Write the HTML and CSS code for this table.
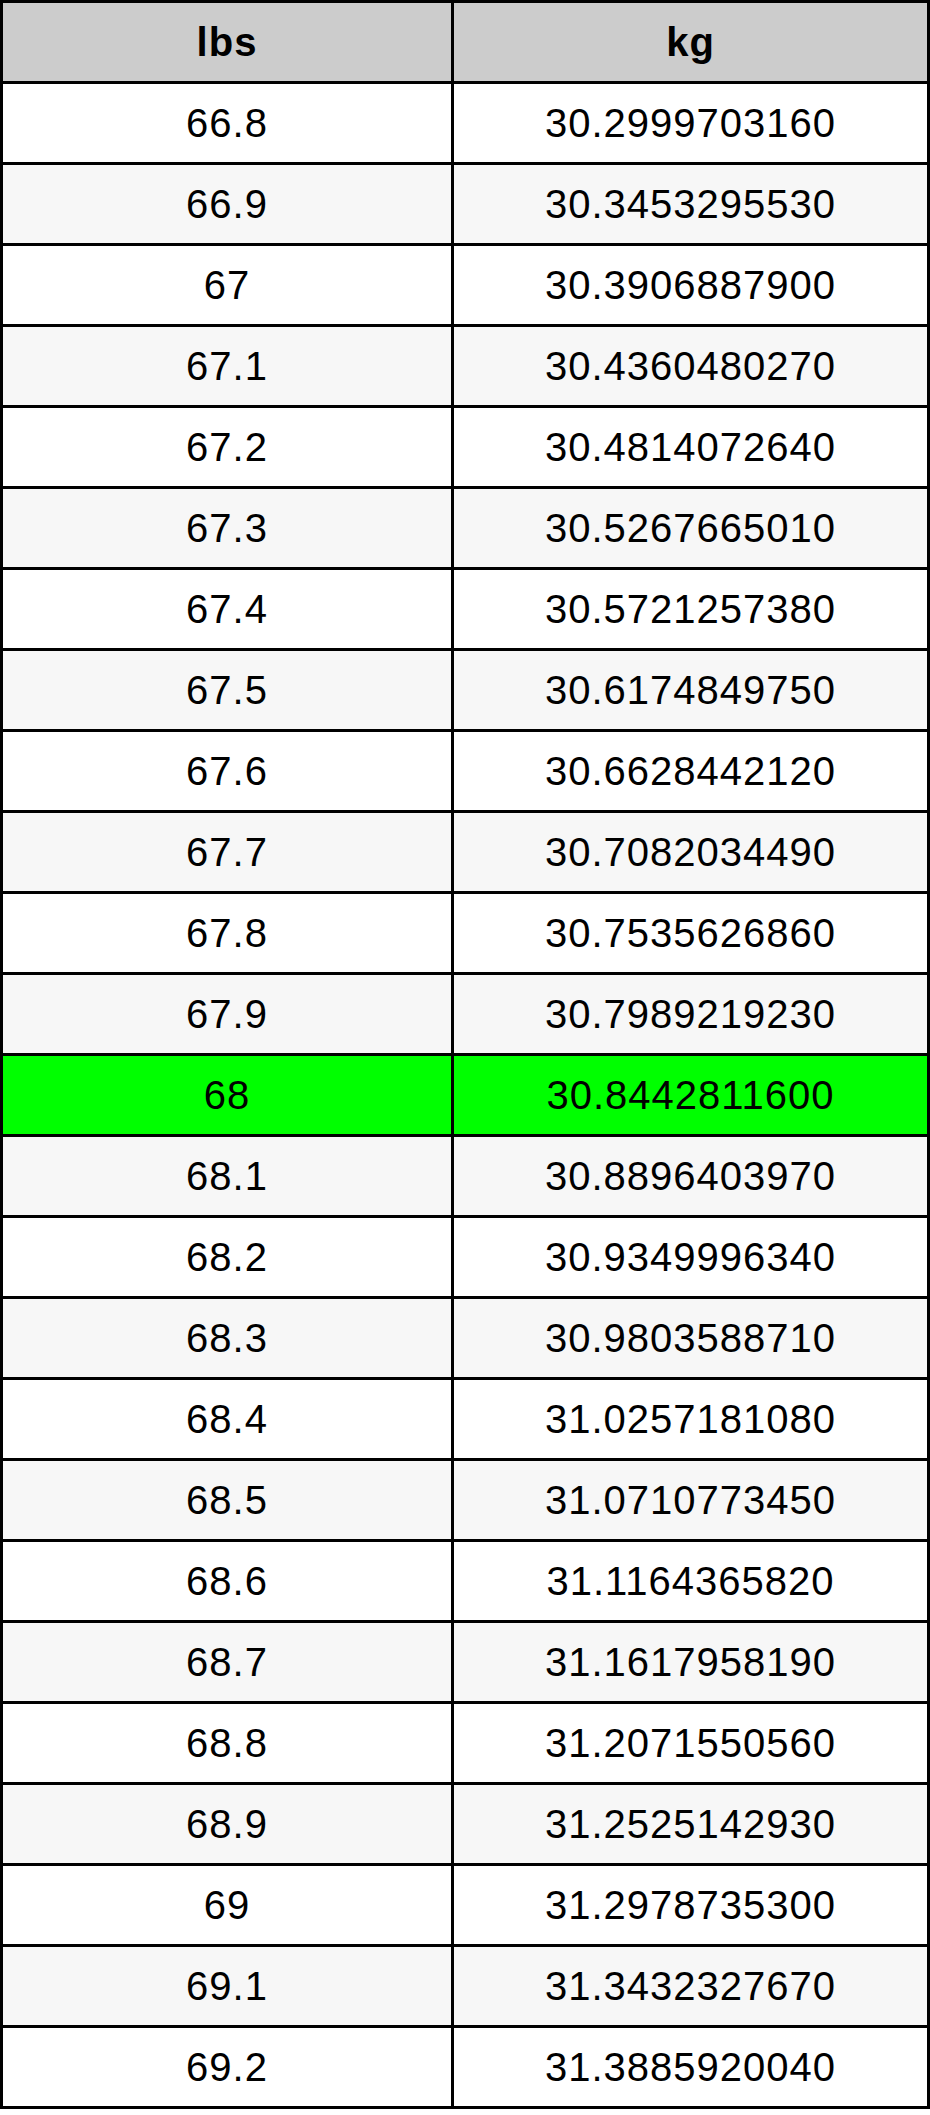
FILE: index.html
```html
<!DOCTYPE html>
<html>
<head>
<meta charset="utf-8">
<link rel="stylesheet" href="styles.css">
</head>
<body>
<div class="table">
  <div class="cell head">lbs</div><div class="cell head">kg</div>
  <div class="cell">66.8</div><div class="cell">30.2999703160</div>
  <div class="cell alt">66.9</div><div class="cell alt">30.3453295530</div>
  <div class="cell">67</div><div class="cell">30.3906887900</div>
  <div class="cell alt">67.1</div><div class="cell alt">30.4360480270</div>
  <div class="cell">67.2</div><div class="cell">30.4814072640</div>
  <div class="cell alt">67.3</div><div class="cell alt">30.5267665010</div>
  <div class="cell">67.4</div><div class="cell">30.5721257380</div>
  <div class="cell alt">67.5</div><div class="cell alt">30.6174849750</div>
  <div class="cell">67.6</div><div class="cell">30.6628442120</div>
  <div class="cell alt">67.7</div><div class="cell alt">30.7082034490</div>
  <div class="cell">67.8</div><div class="cell">30.7535626860</div>
  <div class="cell alt">67.9</div><div class="cell alt">30.7989219230</div>
  <div class="cell hl">68</div><div class="cell hl">30.8442811600</div>
  <div class="cell alt">68.1</div><div class="cell alt">30.8896403970</div>
  <div class="cell">68.2</div><div class="cell">30.9349996340</div>
  <div class="cell alt">68.3</div><div class="cell alt">30.9803588710</div>
  <div class="cell">68.4</div><div class="cell">31.0257181080</div>
  <div class="cell alt">68.5</div><div class="cell alt">31.0710773450</div>
  <div class="cell">68.6</div><div class="cell">31.1164365820</div>
  <div class="cell alt">68.7</div><div class="cell alt">31.1617958190</div>
  <div class="cell">68.8</div><div class="cell">31.2071550560</div>
  <div class="cell alt">68.9</div><div class="cell alt">31.2525142930</div>
  <div class="cell">69</div><div class="cell">31.2978735300</div>
  <div class="cell alt">69.1</div><div class="cell alt">31.3432327670</div>
  <div class="cell">69.2</div><div class="cell">31.3885920040</div>
</div>
</body>
</html>
```
FILE: styles.css
```css
html, body {
  margin: 0;
  padding: 0;
  background: #ffffff;
}
.table {
  display: grid;
  grid-template-columns: 448px 473px;
  grid-auto-rows: 78px;
  gap: 3px;
  padding: 3px;
  width: 930px;
  box-sizing: border-box;
  background: #000000;
  font-family: "Liberation Sans", Arial, sans-serif;
  font-size: 40px;
  letter-spacing: 1px;
  color: #000000;
}
.cell {
  background: #ffffff;
  display: flex;
  align-items: center;
  justify-content: center;
}
.cell.alt {
  background: #f7f7f7;
}
.cell.head {
  background: #cccccc;
  font-weight: bold;
}
.cell.hl {
  background: #00ff00;
}
```
